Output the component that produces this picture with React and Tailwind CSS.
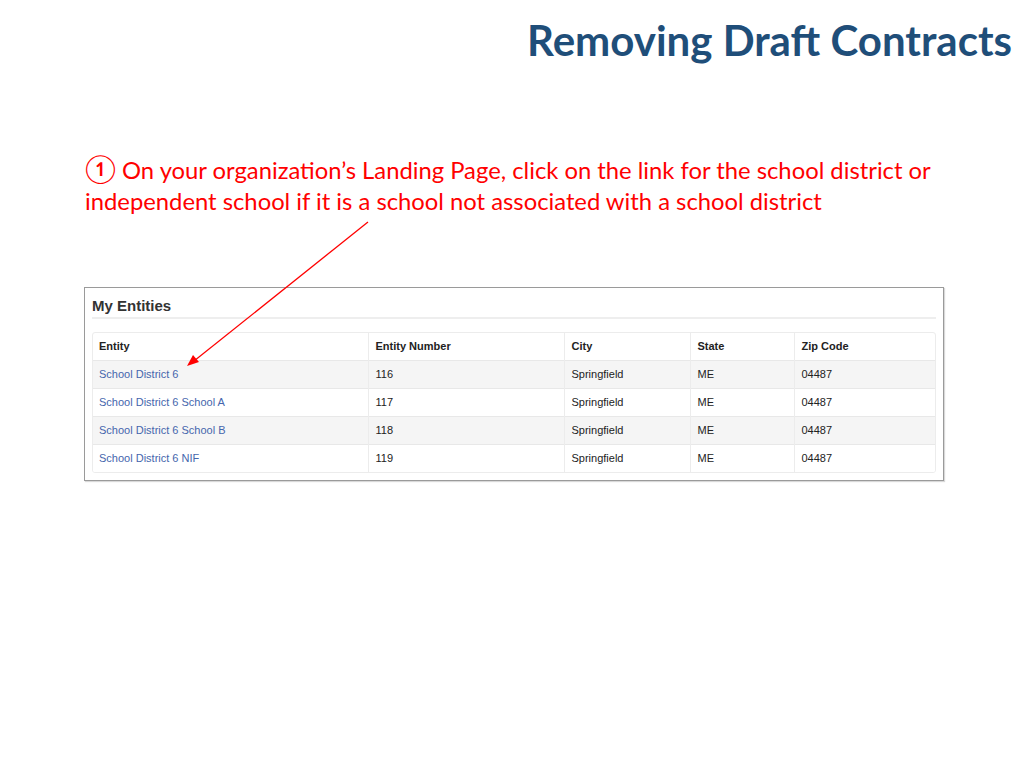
import React from 'react';

const rows = [
    { name: 'School District 6', num: '116' },
    { name: 'School District 6 School A', num: '117' },
    { name: 'School District 6 School B', num: '118' },
    { name: 'School District 6 NIF', num: '119' },
];

export default function App() {
    return (
        <div className="relative w-[1024px] h-[768px] bg-white overflow-hidden" style={{ fontFamily: 'Lato, "Noto Sans", sans-serif' }}>
            <div className="flex justify-end pr-[12px] pt-[13px]">
                <h1 className="text-[42px] leading-[54px] font-bold text-[#1f4e79]">Removing Draft Contracts</h1>
            </div>

            <div className="pl-[85px] pt-[88px] text-[23.8px] leading-[31px] text-[#ff0000] whitespace-nowrap">
                <span><span className="text-[28px] leading-[20px]">①</span> On your organization’s Landing Page, click on the link for the school district or</span>
                <br />
                <span>independent school if it is a school not associated with a school district</span>
            </div>

            <div className="ml-[84px] mt-[70px] w-[860px] h-[194px] border border-[#9a9a9a] shadow-[1px_1px_1px_rgba(0,0,0,0.15)] px-[7px] pt-[9px]" style={{ fontFamily: '"Liberation Sans", Arial, sans-serif' }}>
                <div className="text-[15px] leading-[18px] font-bold text-[#333] pb-[2px] border-b-2 border-[#eeeeee]">My Entities</div>
                <div className="mt-[13px] border border-[#ececec] rounded-[3px] overflow-hidden">
                    <table className="w-full border-collapse text-[11px] text-[#222]">
                        <thead>
                            <tr className="h-[27px] border-b border-[#e8e8e8]">
                                <th className="w-[275px] text-left font-bold pl-[6px] border-r border-[#ececec]">Entity</th>
                                <th className="w-[196px] text-left font-bold pl-[7px] border-r border-[#ececec]">Entity Number</th>
                                <th className="w-[126px] text-left font-bold pl-[7px] border-r border-[#ececec]">City</th>
                                <th className="w-[104px] text-left font-bold pl-[7px] border-r border-[#ececec]">State</th>
                                <th className="text-left font-bold pl-[7px]">Zip Code</th>
                            </tr>
                        </thead>
                        <tbody>
                            {rows.map((r, i) => (
                                <tr key={r.num} className={`h-[28px] border-b last:border-b-0 border-[#e8e8e8] ${i % 2 === 0 ? 'bg-[#f5f5f5]' : 'bg-white'}`}>
                                    <td className="pl-[6px] text-[#4566ad] border-r border-[#ececec]">{r.name}</td>
                                    <td className="pl-[7px] border-r border-[#ececec]">{r.num}</td>
                                    <td className="pl-[7px] border-r border-[#ececec]">Springfield</td>
                                    <td className="pl-[7px] border-r border-[#ececec]">ME</td>
                                    <td className="pl-[7px]">04487</td>
                                </tr>
                            ))}
                        </tbody>
                    </table>
                </div>
            </div>

            {/* arrow pointing to the district link */}
            <svg className="absolute left-0 top-0 pointer-events-none" width="1024" height="768">
                <line x1="368" y1="222" x2="194" y2="361" stroke="#ff0000" strokeWidth="1.3" />
                <polygon points="187,366 193,355 199,362" fill="#ff0000" />
            </svg>
        </div>
    );
}
